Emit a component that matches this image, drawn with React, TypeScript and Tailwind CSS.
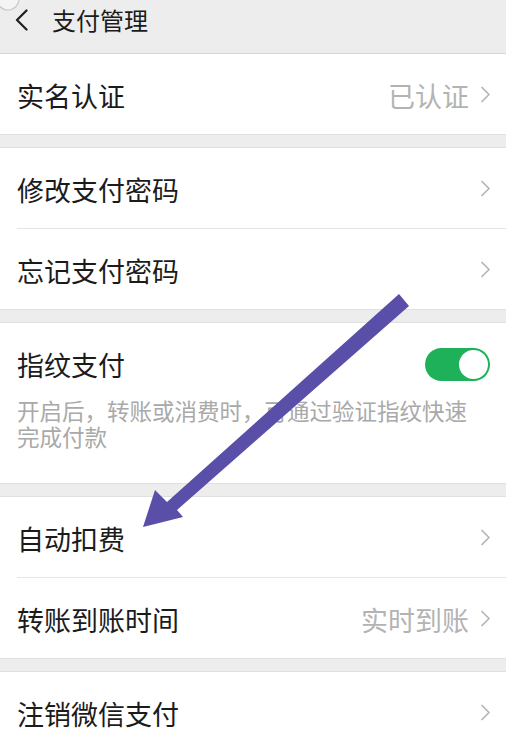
import React from "react";

const FONT = { fontFamily: '"Noto Sans CJK SC", "Noto Sans", sans-serif' };

function Chevron() {
  return (
    <svg width="11" height="17" viewBox="0 0 11 17" className="shrink-0">
      <path d="M2 1.5 L9 8.5 L2 15.5" fill="none" stroke="#b5b5b5" strokeWidth="1.7" strokeLinecap="round" strokeLinejoin="round" />
    </svg>
  );
}

function Row({ label, value, h = "h-[80px]" }: { label: string; value?: string; h?: string }) {
  return (
    <div className={`flex items-center justify-between pl-[17px] pr-[15px] ${h}`}>
      <span className="text-[27px] leading-none text-[#1b1b1b] pt-[2px]">{label}</span>
      <div className="flex items-center gap-[11px]">
        {value && <span className="text-[27px] leading-none text-[#b3b3b3] pt-[2px]">{value}</span>}
        <Chevron />
      </div>
    </div>
  );
}

function Divider() {
  return <div className="ml-[17px] h-px bg-[#e5e5e5]" />;
}

export default function App() {
  return (
    <div className="relative min-h-screen w-full overflow-hidden bg-[#ededed]" style={FONT}>
      {/* header */}
      <div className="h-[54px] border-b border-[#d6d6d6] bg-[#ededed]">
        <div className="flex h-[40px] items-center pl-[15px]">
          <svg width="14" height="22" viewBox="0 0 14 22">
            <path d="M11.5 1.5 L2 11 L11.5 20.5" fill="none" stroke="#222" strokeWidth="2.3" strokeLinecap="round" strokeLinejoin="round" />
          </svg>
          <span className="ml-[23px] text-[24px] leading-none text-[#1b1b1b]">支付管理</span>
        </div>
      </div>

      {/* section 1 */}
      <div className="border-b border-[#e0e0e0] bg-white">
        <Row label="实名认证" value="已认证" />
      </div>

      {/* section 2 */}
      <div className="mt-[12px] border-y border-[#e0e0e0] bg-white">
        <Row label="修改支付密码" />
        <Divider />
        <Row label="忘记支付密码" />
      </div>

      {/* section 3 */}
      <div className="mt-[12px] border-y border-[#e0e0e0] bg-white pl-[17px] pr-[16px] pt-[24px] pb-[34px]">
        <div className="flex h-[34px] items-center justify-between">
          <span className="text-[27px] leading-none text-[#1b1b1b]">指纹支付</span>
          <div className="flex h-[33px] w-[65px] items-center justify-end rounded-full bg-[#1fb15a] pr-[2px]">
            <div className="h-[29px] w-[29px] rounded-full bg-white" />
          </div>
        </div>
        <div className="mt-[16px] text-[22.5px] leading-[26px] text-[#a9a9a9]">
          <div>开启后，转账或消费时，可通过验证指纹快速</div>
          <div>完成付款</div>
        </div>
      </div>

      {/* section 4 */}
      <div className="mt-[12px] border-y border-[#e0e0e0] bg-white">
        <Row label="自动扣费" />
        <Divider />
        <Row label="转账到账时间" value="实时到账" />
      </div>

      {/* section 5 */}
      <div className="mt-[12px] border-t border-[#e0e0e0] bg-white">
        <Row label="注销微信支付" />
      </div>

      {/* top-left artifact */}
      <svg className="pointer-events-none absolute left-0 top-0" width="24" height="16" viewBox="0 0 24 16">
        <circle cx="8" cy="-1" r="11" fill="#f4f4f4" stroke="#c9c9c9" strokeWidth="1.2" />
      </svg>

      {/* purple arrow overlay */}
      <svg className="pointer-events-none absolute left-0 top-0" width="506" height="733" viewBox="0 0 506 733">
        <polygon
          points="399,294 167,502 155,490 143,527 183,517 177,510 409,306"
          fill="#5a4fa8"
        />
      </svg>
    </div>
  );
}
